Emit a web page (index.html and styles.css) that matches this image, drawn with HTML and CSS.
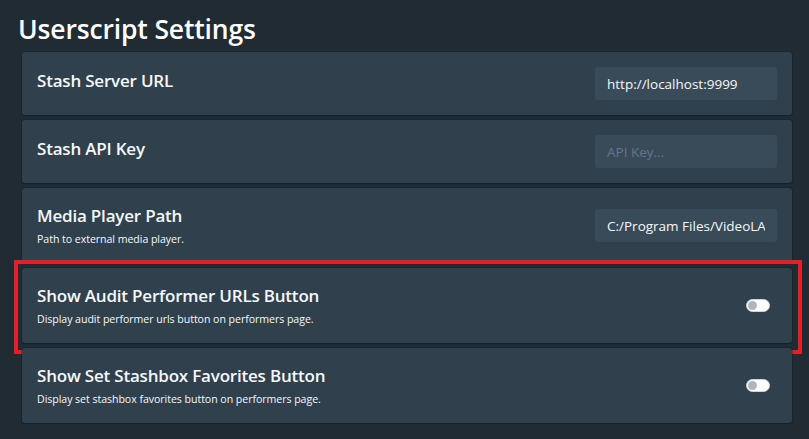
FILE: index.html
```html
<!DOCTYPE html>
<html lang="en">
<head>
<meta charset="utf-8">
<title>Userscript Settings</title>
<link rel="stylesheet" href="styles.css">
</head>
<body>
<div class="page">
  <h1 class="page-title">Userscript Settings</h1>
  <div class="settings">
    <div class="setting short">
      <div class="setting-text"><h3 class="setting-title">Stash Server URL</h3></div>
      <input class="setting-input" type="text" value="http://localhost:9999">
    </div>
    <div class="setting short">
      <div class="setting-text"><h3 class="setting-title">Stash API Key</h3></div>
      <input class="setting-input" type="text" placeholder="API Key...">
    </div>
    <div class="setting">
      <div class="setting-text">
        <h3 class="setting-title">Media Player Path</h3>
        <div class="setting-desc">Path to external media player.</div>
      </div>
      <input class="setting-input" type="text" value="C:/Program Files/VideoLAN/VLC/vlc.exe">
    </div>
    <div class="setting highlighted">
      <div class="setting-text">
        <h3 class="setting-title">Show Audit Performer URLs Button</h3>
        <div class="setting-desc">Display audit performer urls button on performers page.</div>
      </div>
      <span class="switch"><span class="knob"></span></span>
      <span class="annotation"></span>
    </div>
    <div class="setting">
      <div class="setting-text">
        <h3 class="setting-title">Show Set Stashbox Favorites Button</h3>
        <div class="setting-desc">Display set stashbox favorites button on performers page.</div>
      </div>
      <span class="switch"><span class="knob"></span></span>
    </div>
  </div>
</div>
</body>
</html>
```
FILE: styles.css
```css
html, body {
  margin: 0;
  padding: 0;
  background: #202b33;
  height: 100%;
  overflow: hidden;
}
body {
  font-family: "Open Sans", "Noto Sans", sans-serif;
  color: #f5f8fa;
}
.page {
  padding: 11px 17px 0 18px;
}
.page-title {
  margin: 0;
  font-size: 26.5px;
  font-weight: 600;
  line-height: 36px;
  letter-spacing: -0.15px;
  color: #ffffff;
}
.settings {
  margin: 5px 0 0 4px;
  display: flex;
  flex-direction: column;
  gap: 5px;
}
.setting {
  position: relative;
  display: flex;
  align-items: center;
  justify-content: space-between;
  background: #30404d;
  border-radius: 3px;
  box-shadow: 0 0 0 1px rgba(16, 22, 26, 0.25), 0 1px 1px rgba(16, 22, 26, 0.3);
  height: 75px;
  padding: 0 15px 0 15px;
  box-sizing: border-box;
}
.setting.short {
  height: 63px;
}
.setting.short .setting-text {
  padding-bottom: 5px;
}
.setting-title {
  margin: 0;
  font-size: 17px;
  font-weight: 600;
  line-height: 22px;
  letter-spacing: -0.2px;
}
.setting-desc {
  margin-top: 5px;
  font-size: 10.6px;
  line-height: 14px;
  letter-spacing: -0.05px;
}
.setting-input {
  width: 182px;
  height: 33px;
  box-sizing: border-box;
  border: none;
  border-radius: 3px;
  background: #394b59;
  color: #f5f8fa;
  padding: 0 12px;
  font-family: "Open Sans", "Noto Sans", sans-serif;
  font-size: 13.5px;
  outline: none;
}
.setting-input::placeholder {
  color: #62768a;
}
.switch {
  position: relative;
  display: block;
  width: 24px;
  height: 13px;
  margin-right: 7px;
  border-radius: 7px;
  background: #ffffff;
  box-sizing: border-box;
  border: 1px solid #ced4da;
}
.knob {
  position: absolute;
  left: 1px;
  top: 1px;
  width: 9px;
  height: 9px;
  border-radius: 50%;
  background: #adb5bd;
}
.annotation {
  position: absolute;
  left: -8px;
  top: -8px;
  right: -10px;
  bottom: -11px;
  border: 4px solid #e41f27;
  pointer-events: none;
}
```
